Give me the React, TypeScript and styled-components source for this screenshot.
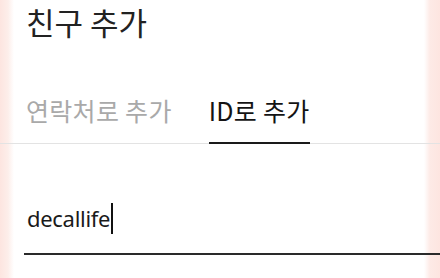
import styled, { createGlobalStyle } from "styled-components";

const GlobalStyle = createGlobalStyle`
  html, body {
    margin: 0;
    padding: 0;
  }
  body {
    font-family: "Noto Sans", "Noto Sans CJK KR", sans-serif;
    background: #fff;
  }
`;

const Page = styled.div`
  width: 440px;
  height: 278px;
  overflow: hidden;
  background: linear-gradient(
    to right,
    #fde5e0 0,
    #fdeeea 8px,
    #fff 14px,
    #fff 424px,
    #fdeae6 430px,
    #fde5e0 440px
  );
  display: flex;
  flex-direction: column;
`;

const Title = styled.h1`
  margin: 0;
  padding: 2px 0 0 26px;
  font-family: "Noto Sans CJK KR", sans-serif;
  font-size: 31px;
  font-weight: 400;
  line-height: 40px;
  color: #222;
`;

const TabBar = styled.div`
  margin-top: 53px;
  display: flex;
  gap: 37px;
  padding-left: 26px;
  border-bottom: 1px solid #e3e3e3;
`;

const Tab = styled.div<{ $active?: boolean }>`
  font-family: "Noto Sans CJK KR", sans-serif;
  font-size: 25px;
  line-height: 30px;
  letter-spacing: 0.3px;
  padding-bottom: 17px;
  color: ${(p) => (p.$active ? "#141414" : "#a9a9a9")};
  border-bottom: 2px solid ${(p) => (p.$active ? "#1a1a1a" : "transparent")};
  margin-bottom: -1px;
`;

const Field = styled.div`
  margin: 58px 0 0 24px;
  padding: 0 0 19px 3px;
  border-bottom: 2px solid #2a2a2a;
  display: flex;
  align-items: center;
`;

const Value = styled.span`
  font-family: "Noto Sans", sans-serif;
  font-size: 22px;
  letter-spacing: -0.3px;
  line-height: 32px;
  color: #1a1a1a;
`;

const Caret = styled.span`
  display: inline-block;
  width: 2px;
  height: 31px;
  margin-left: 1px;
  background: #111;
`;

export default function App() {
  return (
    <Page>
      <GlobalStyle />
      <Title>친구 추가</Title>
      <TabBar>
        <Tab>연락처로 추가</Tab>
        <Tab $active>ID로 추가</Tab>
      </TabBar>
      <Field>
        <Value>decallife</Value>
        <Caret />
      </Field>
    </Page>
  );
}
